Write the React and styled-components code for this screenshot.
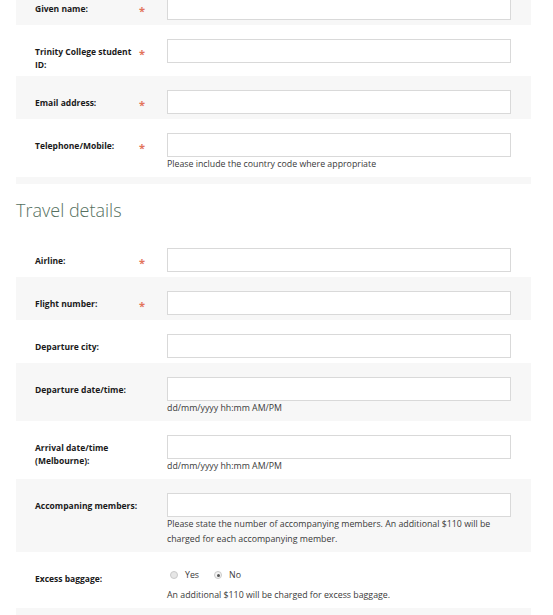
import React from "react";
import styled, { createGlobalStyle } from "styled-components";

const GlobalStyle = createGlobalStyle`
  body {
    margin: 0;
    background: #ffffff;
    font-family: "Open Sans", "Liberation Sans", sans-serif;
    color: #222;
  }
`;

const Page = styled.div`
  width: 515px;
  margin: -18px 0 0 16px;
`;

const Row = styled.div`
  display: grid;
  grid-template-columns: 104px 28px 344px;
  padding: 14px 20px 5px 19px;
  background: ${(p) => (p.$shaded ? "#f7f7f7" : "#ffffff")};
`;

const Label = styled.div`
  grid-column: ${(p) => (p.$wide ? "1 / span 2" : "1")};
  padding-top: 6px;
  padding-right: 4px;
  font-size: 8.5px;
  line-height: 13px;
  font-weight: 700;
  color: #1a1a1a;
`;

const Required = styled.div`
  padding-top: 8px;
  padding-left: 0;
  font-size: 11px;
  line-height: 14px;
  font-weight: 700;
  color: #e2735b;
`;

const Field = styled.div`
  grid-column: 3;
  display: flex;
  flex-direction: column;
`;

const Input = styled.input`
  box-sizing: border-box;
  width: 344px;
  height: 24px;
  margin: 0;
  border: 1px solid #d9d9d9;
  background: #fff;
  outline: none;
`;

const Help = styled.div`
  font-size: 8.8px;
  line-height: 15px;
  color: #3a3a3a;
  margin-top: ${(p) => p.$gap || 0}px;
`;

const SectionEnd = styled.div`
  height: 7px;
  background: #f7f7f7;
`;

const Heading = styled.h2`
  margin: 13px 0 10px 0;
  font-size: 18px;
  line-height: 27px;
  font-weight: 300;
  color: #557060;
`;

const RadioLine = styled.div`
  display: flex;
  align-items: center;
  height: 18px;
  padding-left: 3px;
  font-size: 8.8px;
  color: #3a3a3a;
`;

const RadioOption = styled.label`
  display: flex;
  align-items: center;
  gap: 7px;
  margin-right: 15px;
`;

const RadioDot = styled.span`
  box-sizing: border-box;
  width: 8px;
  height: 8px;
  border-radius: 50%;
  border: 1px solid #c9c9c9;
  background: ${(p) => (p.$checked ? "#f4f4f4" : "#e6e6e6")};
  display: flex;
  align-items: center;
  justify-content: center;

  &::after {
    content: "";
    width: 3px;
    height: 3px;
    border-radius: 50%;
    background: ${(p) => (p.$checked ? "#555" : "transparent")};
  }
`;

const FormRow = ({ label, required, help, shaded }) => (
  <Row $shaded={shaded}>
    <Label $wide={!required}>{label}</Label>
    {required && <Required>*</Required>}
    <Field>
      <Input type="text" />
      {help && help.map((h, i) => <Help key={i}>{h}</Help>)}
    </Field>
  </Row>
);

const personal = [
  { label: "Given name:", required: true },
  { label: "Trinity College student ID:", required: true },
  { label: "Email address:", required: true },
  {
    label: "Telephone/Mobile:",
    required: true,
    help: ["Please include the country code where appropriate"],
  },
];

const travel = [
  { label: "Airline:", required: true },
  { label: "Flight number:", required: true },
  { label: "Departure city:" },
  { label: "Departure date/time:", help: ["dd/mm/yyyy hh:mm AM/PM"] },
  { label: "Arrival date/time (Melbourne):", help: ["dd/mm/yyyy hh:mm AM/PM"] },
  {
    label: "Accompaning members:",
    help: [
      "Please state the number of accompanying members. An additional $110 will be charged for each accompanying member.",
    ],
  },
];

export default function App() {
  return (
    <Page>
      <GlobalStyle />
      {personal.map((f, i) => (
        <FormRow key={f.label} {...f} shaded={i % 2 === 0} />
      ))}
      <SectionEnd />
      <Heading>Travel details</Heading>
      {travel.map((f, i) => (
        <FormRow key={f.label} {...f} shaded={i % 2 === 1} />
      ))}
      <Row>
        <Label $wide>Excess baggage:</Label>
        <Field>
          <RadioLine>
            <RadioOption>
              <RadioDot />
              Yes
            </RadioOption>
            <RadioOption>
              <RadioDot $checked />
              No
            </RadioOption>
          </RadioLine>
          <Help $gap={4}>An additional $110 will be charged for excess baggage.</Help>
        </Field>
      </Row>
      <SectionEnd />
    </Page>
  );
}
